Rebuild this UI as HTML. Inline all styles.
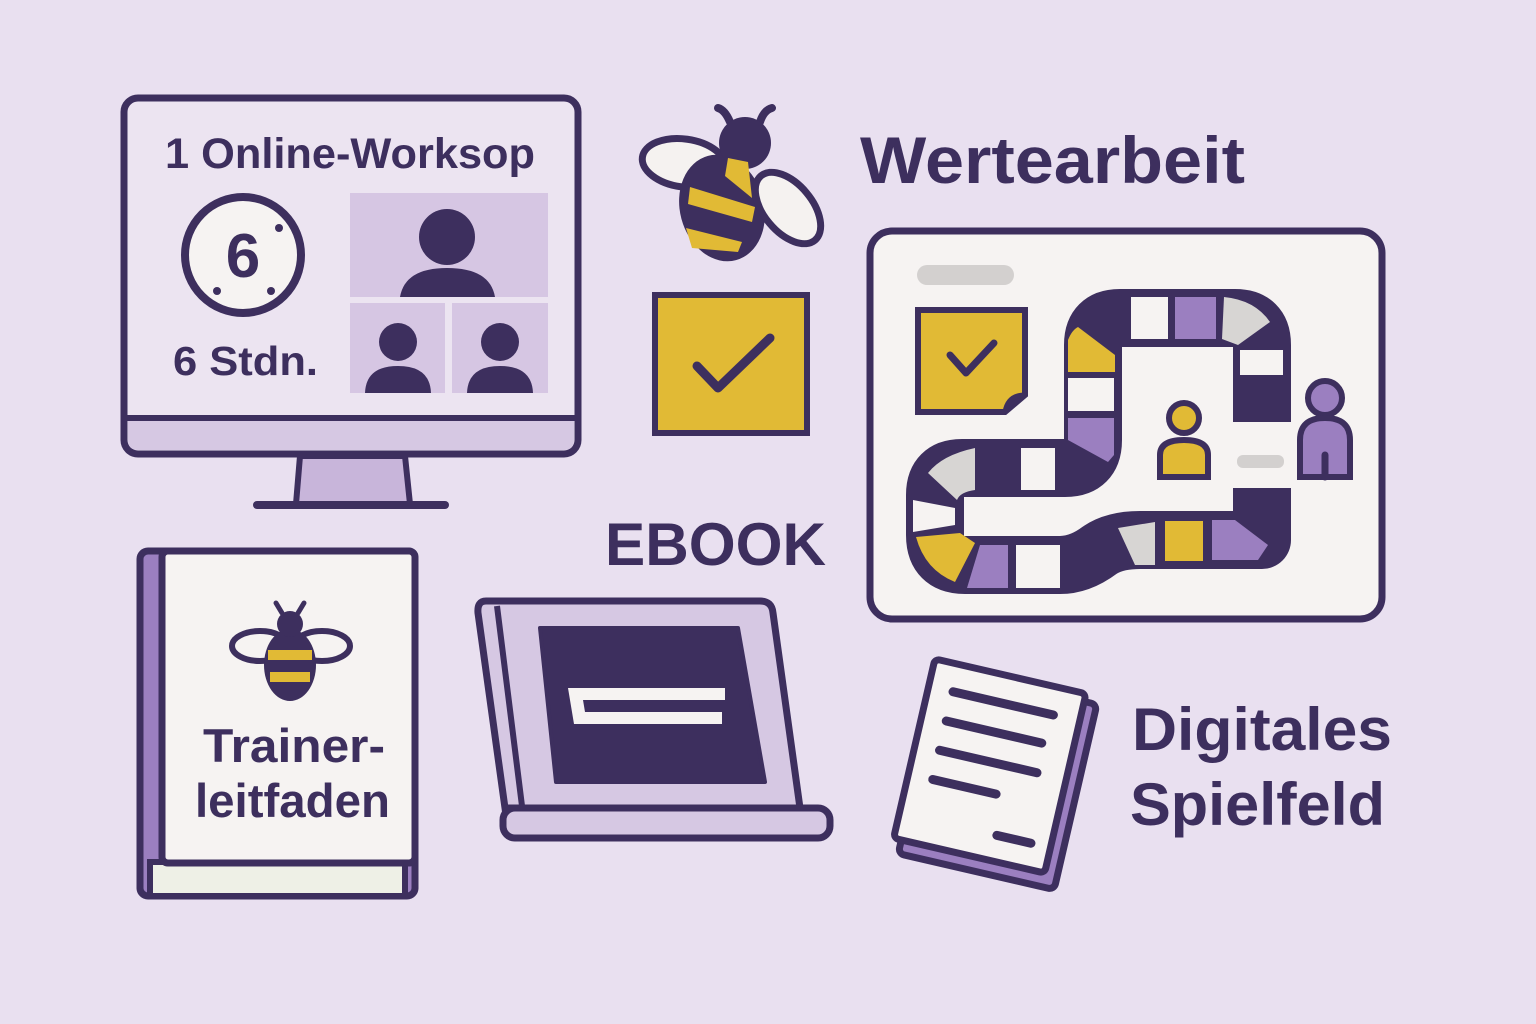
<!DOCTYPE html>
<html><head><meta charset="utf-8"><style>
html,body{margin:0;padding:0;background:#e9e0f0;}
svg{display:block}
text{font-family:"Liberation Sans",sans-serif;font-weight:bold;fill:#3d2f5e}
</style></head><body>
<svg width="1536" height="1024" viewBox="0 0 1536 1024">
<rect width="1536" height="1024" fill="#e9e0f0"/>
<g stroke="#3d2f5e" stroke-linejoin="round">
<!-- Monitor -->
<path d="M300 456 L405 456 L410 504 L296 504 Z" fill="#c8b5da" stroke-width="6"/>
<line x1="257" y1="505" x2="445" y2="505" stroke-width="8" stroke-linecap="round"/>
<rect x="124" y="98" width="454" height="356" rx="14" fill="#ece4f1" stroke-width="7"/>
<path d="M128 418 H574 V440 Q574 450 564 450 H138 Q128 450 128 440 Z" fill="#d6c8e3" stroke="none"/>
<line x1="126" y1="418" x2="576" y2="418" stroke-width="6"/>
</g>
<text x="165" y="168" font-size="43" textLength="370" lengthAdjust="spacingAndGlyphs">1 Online-Worksop</text>
<circle cx="243" cy="255" r="58" fill="#f6f3f2" stroke="#3d2f5e" stroke-width="8"/>
<text x="243" y="277" font-size="62" text-anchor="middle">6</text>
<g fill="#3d2f5e"><circle cx="279" cy="228" r="4"/><circle cx="217" cy="291" r="4"/><circle cx="271" cy="291" r="4"/></g>
<text x="173" y="375" font-size="41" textLength="145" lengthAdjust="spacingAndGlyphs">6 Stdn.</text>
<g fill="#d6c6e3"><rect x="350" y="193" width="198" height="104"/><rect x="350" y="303" width="95" height="90"/><rect x="452" y="303" width="96" height="90"/></g>
<g fill="#3d2f5e">
<circle cx="447" cy="237" r="28"/><path d="M400 297 Q405 268 447 268 Q490 268 495 297 Z"/>
<circle cx="398" cy="342" r="19"/><path d="M365 393 Q366 366 398 366 Q430 366 431 393 Z"/>
<circle cx="500" cy="342" r="19"/><path d="M467 393 Q468 366 500 366 Q532 366 533 393 Z"/>
</g>

<!-- Bee -->
<g stroke="#3d2f5e" stroke-width="8" stroke-linecap="round">
<path d="M730 122 Q725 110 718 108" fill="none"/><path d="M760 122 Q764 110 772 108" fill="none"/>
</g>
<ellipse cx="684" cy="163" rx="42" ry="24" transform="rotate(8 684 163)" fill="#f5f2f0" stroke="#3d2f5e" stroke-width="7"/>
<ellipse cx="722" cy="208" rx="42" ry="54" transform="rotate(-15 722 208)" fill="#3d2f5e"/>
<circle cx="745" cy="143" r="26" fill="#3d2f5e"/>
<path d="M728 158 L748 162 L752 198 L725 176 Z" fill="#e1ba35"/>
<path d="M690 187 L755 207 L752 222 L688 204 Z" fill="#e1ba35"/>
<path d="M686 228 L742 242 L738 252 L692 248 Z" fill="#e1ba35"/>
<ellipse cx="788" cy="208" rx="42" ry="24" transform="rotate(50 788 208)" fill="#f5f2f0" stroke="#3d2f5e" stroke-width="7"/>
<text x="860" y="183" font-size="66" textLength="385" lengthAdjust="spacingAndGlyphs">Wertearbeit</text>

<!-- Checkbox -->
<rect x="655" y="295" width="152" height="138" fill="#e1ba35" stroke="#3d2f5e" stroke-width="6"/>
<path d="M697 366 L718 388 L770 338" fill="none" stroke="#3d2f5e" stroke-width="9" stroke-linecap="round" stroke-linejoin="round"/>

<!-- Game board -->
<rect x="870" y="231" width="512" height="388" rx="22" fill="#f6f3f2" stroke="#3d2f5e" stroke-width="7"/>
<rect x="917" y="265" width="97" height="20" rx="10" fill="#d3d0cf"/>
<rect x="1237" y="455" width="47" height="13" rx="6" fill="#d3d0cf"/>
<path d="M918 310 H1025 V395 L1005 412 H918 Z" fill="#e1ba35" stroke="#3d2f5e" stroke-width="6"/>
<path d="M1005 412 Q1008 395 1025 395" fill="#3d2f5e" stroke="#3d2f5e" stroke-width="5"/>
<path d="M950 355 L966 373 L994 343" fill="none" stroke="#3d2f5e" stroke-width="7" stroke-linecap="round" stroke-linejoin="round"/>
<!-- track -->
<path d="M1262 422 L1262 345 Q1262 318 1235 318 L1120 318 Q1093 318 1093 345 L1093 440 Q1093 468 1065 468 L962 468 Q935 468 935 495 L935 535 Q935 565 965 565 L1060 565 Q1080 565 1100 550 Q1115 540 1140 540 L1262 540 L1262 488" fill="none" stroke="#3d2f5e" stroke-width="58" stroke-linejoin="round"/>
<g stroke="none">
<rect x="1131" y="297" width="37" height="42" fill="#f6f3f2"/>
<rect x="1175" y="297" width="41" height="42" fill="#9b7fc0"/>
<path d="M1224 297 Q1255 300 1270 322 L1238 345 L1222 339 Z" fill="#d7d5d3"/>
<rect x="1240" y="350" width="43" height="25" fill="#f6f3f2"/>
<path d="M1068 340 Q1072 330 1078 327 L1115 355 L1115 372 L1068 372 Z" fill="#e1ba35"/>
<rect x="1068" y="378" width="46" height="33" fill="#f6f3f2"/>
<path d="M1068 418 H1114 V455 L1108 462 L1068 440 Z" fill="#9b7fc0"/>
<rect x="1021" y="448" width="34" height="42" fill="#f6f3f2"/>
<path d="M928 473 Q942 455 975 448 V490 Q960 492 957 500 Z" fill="#d7d5d3"/>
<path d="M913 500 L955 508 L955 525 L913 532 Z" fill="#f6f3f2"/>
<path d="M916 537 L960 533 L975 543 L955 582 Q925 570 916 537 Z" fill="#e1ba35"/>
<path d="M980 545 H1008 V588 H967 Z" fill="#9b7fc0"/>
<rect x="1016" y="545" width="44" height="43" fill="#f6f3f2"/>
<path d="M1118 528 L1155 522 V565 H1135 Z" fill="#d7d5d3"/>
<rect x="1165" y="521" width="38" height="40" fill="#e1ba35"/>
<path d="M1212 520 H1235 L1268 545 L1258 560 H1212 Z" fill="#9b7fc0"/>
</g>
<!-- persons -->
<circle cx="1184" cy="418" r="15" fill="#e1ba35" stroke="#3d2f5e" stroke-width="6"/>
<path d="M1160 477 V455 Q1160 440 1184 440 Q1208 440 1208 455 V477 Z" fill="#e1ba35" stroke="#3d2f5e" stroke-width="6"/>
<circle cx="1325" cy="398" r="17" fill="#9b7fc0" stroke="#3d2f5e" stroke-width="6"/>
<path d="M1300 477 V440 Q1300 418 1325 418 Q1350 418 1350 440 V477 Z" fill="#9b7fc0" stroke="#3d2f5e" stroke-width="6"/>
<line x1="1325" y1="455" x2="1325" y2="477" stroke="#3d2f5e" stroke-width="7" stroke-linecap="round"/>

<text x="605" y="565" font-size="60" textLength="221" lengthAdjust="spacingAndGlyphs">EBOOK</text>

<!-- Book -->
<rect x="140" y="551" width="275" height="345" rx="8" fill="#9b7fc0" stroke="#3d2f5e" stroke-width="7"/>
<rect x="150" y="862" width="255" height="34" fill="#eef0e6" stroke="#3d2f5e" stroke-width="6"/>
<rect x="162" y="551" width="253" height="312" rx="6" fill="#f6f3f2" stroke="#3d2f5e" stroke-width="7"/>
<g>
<path d="M282 613 L276 603 M298 613 L304 603" stroke="#3d2f5e" stroke-width="5" stroke-linecap="round"/>
<ellipse cx="260" cy="646" rx="28" ry="15" fill="#f6f3f2" stroke="#3d2f5e" stroke-width="6"/>
<ellipse cx="322" cy="646" rx="28" ry="15" fill="#f6f3f2" stroke="#3d2f5e" stroke-width="6"/>
<ellipse cx="290" cy="665" rx="26" ry="36" fill="#3d2f5e"/>
<circle cx="290" cy="624" r="13" fill="#3d2f5e"/>
<rect x="268" y="650" width="44" height="10" fill="#e1ba35"/>
<rect x="270" y="672" width="40" height="10" fill="#e1ba35"/>
</g>
<text x="203" y="762" font-size="47" textLength="182" lengthAdjust="spacingAndGlyphs">Trainer-</text>
<text x="195" y="817" font-size="47" textLength="195" lengthAdjust="spacingAndGlyphs">leitfaden</text>

<!-- Laptop -->
<path d="M486 601 H760 Q772 601 773 613 L800 808 H505 L478 613 Q477 601 486 601 Z" fill="#d6c8e3" stroke="#3d2f5e" stroke-width="7"/>
<line x1="497" y1="606" x2="522" y2="806" stroke="#3d2f5e" stroke-width="6"/>
<path d="M540 628 H738 L765 782 H556 Z" fill="#3d2f5e" stroke="#3d2f5e" stroke-width="4" stroke-linejoin="round"/>
<path d="M568 688 H725 V700 H583 L585 712 H722 V724 H574 Z" fill="#f6f3f2"/>
<rect x="503" y="808" width="327" height="30" rx="12" fill="#d6c8e3" stroke="#3d2f5e" stroke-width="7"/>

<!-- Document -->
<g transform="rotate(13 980 775)">
<rect x="918" y="680" width="160" height="190" rx="6" fill="#9b7fc0" stroke="#3d2f5e" stroke-width="7"/>
<rect x="910" y="672" width="155" height="184" rx="5" fill="#f6f3f2" stroke="#3d2f5e" stroke-width="7"/>
<g stroke="#3d2f5e" stroke-width="9" stroke-linecap="round">
<line x1="935" y1="700" x2="1038" y2="700"/><line x1="935" y1="730" x2="1033" y2="730"/>
<line x1="935" y1="760" x2="1035" y2="760"/><line x1="935" y1="790" x2="1000" y2="790"/>
<line x1="1010" y1="830" x2="1045" y2="830"/>
</g>
</g>
<text x="1132" y="750" font-size="60" textLength="260" lengthAdjust="spacingAndGlyphs">Digitales</text>
<text x="1130" y="825" font-size="60" textLength="255" lengthAdjust="spacingAndGlyphs">Spielfeld</text>
</svg>
</body></html>
